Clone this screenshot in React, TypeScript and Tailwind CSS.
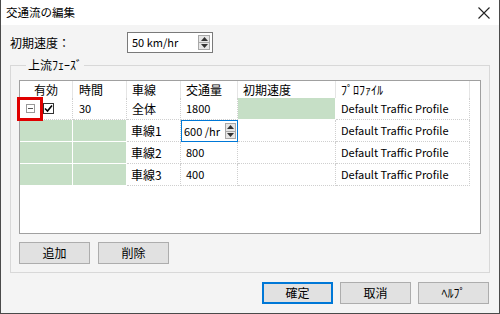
const font = "font-['Noto_Sans_CJK_JP','Noto_Sans',sans-serif]";

const SpinButtons = ({ className }: { className?: string }) => (
    <div className={`flex flex-col ${className ?? ''}`}>
        <div className="flex-1 flex items-center justify-center bg-[#e6e6e6] border border-[#a8a8a8]">
            <svg width="7" height="4" viewBox="0 0 7 4"><path d="M0 4 L3.5 0 L7 4 Z" fill="#333" /></svg>
        </div>
        <div className="flex-1 flex items-center justify-center bg-[#e6e6e6] border border-t-0 border-[#a8a8a8]">
            <svg width="7" height="4" viewBox="0 0 7 4"><path d="M0 0 L3.5 4 L7 0 Z" fill="#333" /></svg>
        </div>
    </div>
)

const Cell = ({ children, green, className }: { children?: React.ReactNode, green?: boolean, className?: string }) => (
    <div
        className={`h-[22px] flex items-center px-[5px] border-r border-b ${green ? 'bg-[#c6dfc6] border-white border-solid' : 'border-dotted border-[#cfcfcf]'} ${className ?? ''}`}
    >
        {children}
    </div>
)

const Btn = ({ label, primary }: { label: string, primary?: boolean }) => (
    <button
        className={`w-[71px] h-[22px] bg-[#e1e1e1] text-[12px] text-black flex items-center justify-center ${primary ? 'border-2 border-[#0078d7]' : 'border border-[#adadad]'}`}
    >
        {label}
    </button>
)

const lanes = [
    { name: '車線1', volume: '600', editing: true },
    { name: '車線2', volume: '800' },
    { name: '車線3', volume: '400' },
]

export default function App() {
    return (
        <main className={`w-[500px] h-[314px] flex flex-col bg-[#f4f4f4] border-x border-b border-[#4a4a4a] text-[12px] text-black ${font}`}>
            {/* title bar */}
            <div className="h-[25px] bg-white flex items-center justify-between pl-[5px] pr-[9px]">
                <span className="text-[11.5px]">交通流の編集</span>
                <svg width="12" height="12" viewBox="0 0 12 12">
                    <path d="M0.5 0.5 L11.5 11.5 M11.5 0.5 L0.5 11.5" stroke="#222" strokeWidth="1.1" />
                </svg>
            </div>

            <div className="flex flex-col pl-[9px] pr-[9px]">
                <div className="flex items-center mt-[7px]">
                    <span className="w-[117px]">初期速度：</span>
                    <div className="w-[86px] h-[21px] bg-white border border-[#7a7a7a] flex items-center justify-between pl-[4px] pr-[2px]">
                        <span className="text-[11px]">50 km/hr</span>
                        <SpinButtons className="w-[12px] h-[15px]" />
                    </div>
                </div>

                <fieldset className="mt-[4px] h-[216px] border border-[#d8d8d8] pl-[8px] pr-[8px]">
                    <legend className="ml-[7px] px-[2px] leading-[16px]">上流ﾌｪｰｽﾞ</legend>

                    <div className="relative mt-[7px] w-[462px] h-[154px] bg-white border border-[#a0a0a0]">
                        <div className="grid grid-cols-[53px_54px_54px_57px_98px_134px_1fr]">
                            {/* header */}
                            <div className="h-[17px] flex items-center justify-center border-r border-[#e5e5e5]">有効</div>
                            <div className="h-[17px] flex items-center pl-[6px] border-r border-[#e5e5e5]">時間</div>
                            <div className="h-[17px] flex items-center pl-[5px] border-r border-[#e5e5e5]">車線</div>
                            <div className="h-[17px] flex items-center pl-[5px] border-r border-[#e5e5e5]">交通量</div>
                            <div className="h-[17px] flex items-center pl-[5px] border-r border-[#e5e5e5]">初期速度</div>
                            <div className="h-[17px] flex items-center pl-[5px] border-r border-[#e5e5e5]">ﾌﾟﾛﾌｧｲﾙ</div>
                            <div className="h-[17px]" />

                            {/* total row */}
                            <Cell className="pl-[6px] gap-[8px]">
                                <div className="w-[9px] h-[9px] border border-[#999] flex items-center justify-center">
                                    <div className="w-[5px] h-px bg-[#555]" />
                                </div>
                                <div className="w-[11px] h-[11px] border border-[#333] bg-white flex items-center justify-center">
                                    <svg width="9" height="9" viewBox="0 0 9 9"><path d="M1 4.5 L3.5 7 L8 1.5" stroke="#000" strokeWidth="1.6" fill="none" /></svg>
                                </div>
                            </Cell>
                            <Cell className="pl-[6px] text-[11px]">30</Cell>
                            <Cell>全体</Cell>
                            <Cell className="text-[11px]">1800</Cell>
                            <Cell green />
                            <Cell className="text-[11px]">Default Traffic Profile</Cell>
                            <div className="h-[22px]" />

                            {lanes.map((lane) => (
                                <div key={lane.name} className="contents">
                                    <Cell green />
                                    <Cell green />
                                    <Cell className="pl-[4px]">{lane.name}</Cell>
                                    {lane.editing ? (
                                        <div className="h-[22px] border border-[#0078d7] bg-white flex items-center justify-between pl-[2px] pr-[1px]">
                                            <span className="text-[11px]">{lane.volume} /hr</span>
                                            <SpinButtons className="w-[11px] h-[16px]" />
                                        </div>
                                    ) : (
                                        <Cell className="text-[11px]">{lane.volume}</Cell>
                                    )}
                                    <Cell />
                                    <Cell className="text-[11px]">Default Traffic Profile</Cell>
                                    <div className="h-[22px]" />
                                </div>
                            ))}
                        </div>

                        {/* annotation highlight */}
                        <div className="absolute left-[-3px] top-[16px] w-[26px] h-[24px] border-[3px] border-[#e00000]" />
                    </div>

                    <div className="flex gap-[8px] mt-[8px]">
                        <Btn label="追加" />
                        <Btn label="削除" />
                    </div>
                </fieldset>

                <div className="flex justify-end gap-[7px] mt-[9px] pr-px">
                    <Btn label="確定" primary />
                    <Btn label="取消" />
                    <Btn label="ﾍﾙﾌﾟ" />
                </div>
            </div>
        </main>
    )
}
